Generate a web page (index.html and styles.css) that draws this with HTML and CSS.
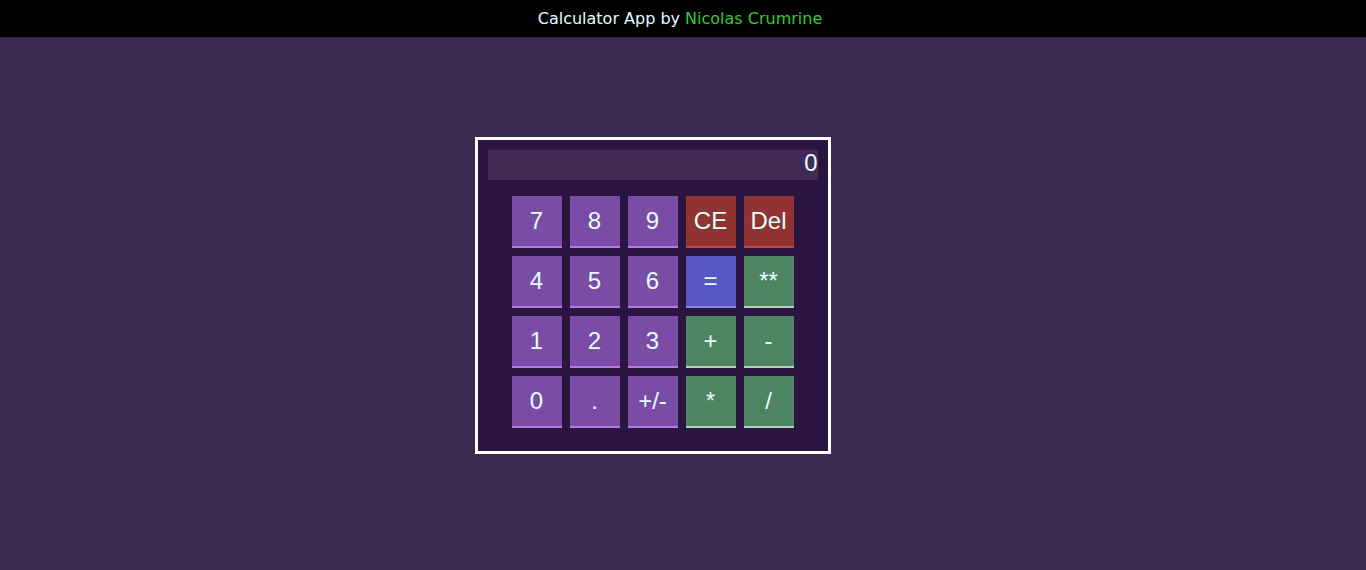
FILE: index.html
```html
<!DOCTYPE html>
<html>
<head>
<meta charset="utf-8">
<title>Calculator App</title>
<link rel="stylesheet" href="styles.css">
</head>
<body>
<header class="topbar">Calculator App by <span class="author">Nicolas Crumrine</span></header>
<main class="stage">
  <div class="calc">
    <div class="display">0</div>
    <div class="keys">
      <button class="key num">7</button>
      <button class="key num">8</button>
      <button class="key num">9</button>
      <button class="key clear">CE</button>
      <button class="key clear">Del</button>
      <button class="key num">4</button>
      <button class="key num">5</button>
      <button class="key num">6</button>
      <button class="key equals">=</button>
      <button class="key op">**</button>
      <button class="key num">1</button>
      <button class="key num">2</button>
      <button class="key num">3</button>
      <button class="key op">+</button>
      <button class="key op">-</button>
      <button class="key num">0</button>
      <button class="key num">.</button>
      <button class="key num">+/-</button>
      <button class="key op">*</button>
      <button class="key op">/</button>
    </div>
  </div>
</main>
</body>
</html>
```

FILE: styles.css
```css
* { box-sizing: border-box; }
html, body {
  margin: 0;
  padding: 0;
  height: 100%;
}
body {
  background: #3b2a4e;
  font-family: "DejaVu Sans", Verdana, sans-serif;
}
.topbar {
  height: 37px;
  background: #000;
  color: #e0ffff;
  font-size: 16px;
  line-height: 37px;
  text-align: center;
  padding-right: 6px;
}
.author {
  color: #32cd32;
}
.stage {
  display: flex;
  justify-content: center;
  padding: 100px 61px 0 0;
}
.calc {
  width: 356px;
  border: 3px solid #fff;
  background: #2a1440;
  padding: 10px 10px 23px 10px;
}
.display {
  height: 30px;
  background: #422a55;
  color: #e0ffff;
  font-family: "Liberation Sans", Arial, sans-serif;
  font-size: 24px;
  line-height: 26px;
  text-align: right;
}
.keys {
  display: grid;
  grid-template-columns: repeat(5, 50px);
  grid-auto-rows: 52px;
  gap: 8px;
  justify-content: center;
  margin-top: 16px;
}
.key {
  border: none;
  border-bottom: 2px solid;
  padding: 0;
  margin: 0;
  color: #e0ffff;
  font-family: "Liberation Sans", Arial, sans-serif;
  font-size: 24px;
  cursor: pointer;
}
.num {
  background: #7b4ca5;
  border-bottom-color: #b27ae0;
}
.clear {
  background: #923333;
  border-bottom-color: #c44444;
}
.equals {
  background: #5a56c4;
  border-bottom-color: #8a86e0;
}
.op {
  background: #4f8462;
  border-bottom-color: #b8cfc0;
}
```
